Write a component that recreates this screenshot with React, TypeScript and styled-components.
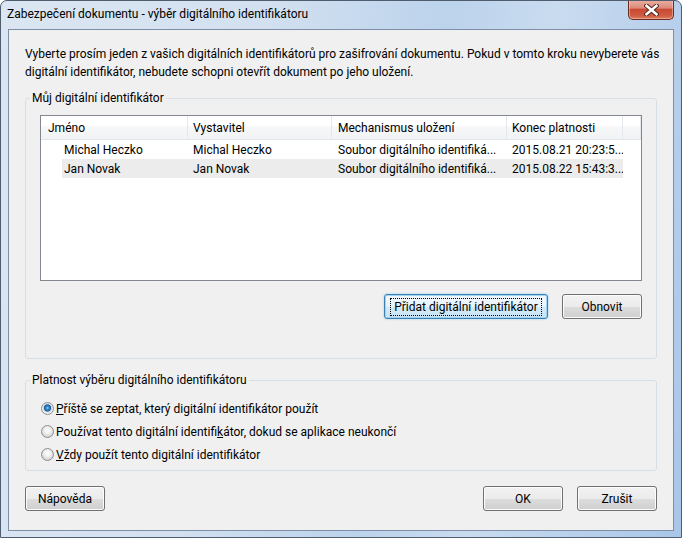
import { createGlobalStyle, styled } from "styled-components";

const GlobalStyle = createGlobalStyle`
  html, body {
    margin: 0;
    padding: 0;
  }
  body {
    width: 682px;
    height: 538px;
    overflow: hidden;
    font-family: Roboto, "Liberation Sans", sans-serif;
    font-size: 12px;
    color: #000;
  }
`;

const Window = styled.div`
  width: 682px;
  height: 538px;
  box-sizing: border-box;
  border: 1px solid #4f5d6e;
  border-radius: 7px 7px 0 0;
  background: linear-gradient(
    100deg,
    #dbe6f2 0%,
    #d2e0f0 35%,
    #bcd3ec 58%,
    #c9dbef 72%,
    #a9c6e8 100%
  );
  display: flex;
  flex-direction: column;
  overflow: hidden;
`;

const TitleBar = styled.div`
  height: 28px;
  display: flex;
  align-items: flex-start;
  flex-shrink: 0;
`;

const Title = styled.div`
  padding-left: 6px;
  line-height: 27px;
  white-space: nowrap;
`;

const CloseButton = styled.div`
  margin: -1px 7px 0 auto;
  width: 46px;
  height: 20px;
  box-sizing: border-box;
  border: 1px solid #6b2b20;
  border-top: none;
  border-radius: 0 0 5px 5px;
  background: linear-gradient(
    #eab1a4 0%,
    #dd8a78 42%,
    #c84a33 50%,
    #cf5a3f 80%,
    #dc7a5c 100%
  );
  box-shadow: inset 0 0 0 1px rgba(255, 220, 210, 0.45);
  display: flex;
  align-items: center;
  justify-content: center;
`;

const Client = styled.div`
  flex: 1;
  margin: 0 7px 6px 7px;
  border: 1px solid #7d8fa4;
  background: #f0f0f0;
  padding: 15px 16px 0 16px;
  display: flex;
  flex-direction: column;
`;

const Intro = styled.div`
  line-height: 18px;
  white-space: nowrap;
  margin-bottom: 8px;
`;

const GroupBox = styled.fieldset<{ $gap?: number }>`
  margin: ${(p) => p.$gap ?? 0}px 0 0 0;
  padding: 0;
  border: 1px solid #d5dfe5;
  border-radius: 3px;
  min-width: 0;
`;

const Legend = styled.legend`
  margin-left: 4px;
  padding: 0 2px;
  line-height: 18px;
`;

const Table = styled.div`
  width: 602px;
  height: 166px;
  box-sizing: border-box;
  margin: 8px 0 0 14px;
  border: 1px solid #828790;
  background: #fff;
`;

const HeaderRow = styled.div`
  display: grid;
  grid-template-columns: 147px 144px 175px 116px 1fr;
  height: 24px;
  box-sizing: border-box;
  border-bottom: 1px solid #e2e5ea;
  background: linear-gradient(#ffffff 0%, #ffffff 45%, #f6f7f8 46%, #f2f3f5 100%);
`;

const HeaderCell = styled.div<{ $pad: number }>`
  border-right: 1px solid #e3e8ee;
  padding-left: ${(p) => p.$pad}px;
  padding-top: 1px;
  line-height: 22px;
  white-space: nowrap;
  overflow: hidden;
`;

const DataRow = styled.div<{ $selected?: boolean }>`
  margin-left: 21px;
  width: 561px;
  height: 19px;
  display: grid;
  grid-template-columns: 126px 144px 175px 116px;
  line-height: 21px;
  background: ${(p) => (p.$selected ? "#ececec" : "transparent")};
`;

const Cell = styled.div<{ $pad: number }>`
  padding-left: ${(p) => p.$pad}px;
  white-space: nowrap;
  overflow: hidden;
`;

const ButtonRow = styled.div`
  width: 602px;
  margin: 13px 0 39px 14px;
  display: flex;
  justify-content: flex-end;
  gap: 14px;
`;

const Button = styled.button<{ $w: number; $focused?: boolean }>`
  width: ${(p) => p.$w}px;
  height: 25px;
  box-sizing: border-box;
  padding: 0;
  font: inherit;
  color: #000;
  border-radius: 3px;
  border: 1px solid ${(p) => (p.$focused ? "#3c7fb1" : "#707070")};
  background: ${(p) =>
    p.$focused
      ? "linear-gradient(#f2f8fd 0%, #e7f3fb 50%, #d4ebf8 51%, #c6e3f5 100%)"
      : "linear-gradient(#f2f2f2 0%, #ebebeb 50%, #dddddd 51%, #cfcfcf 100%)"};
  box-shadow: ${(p) =>
    p.$focused
      ? "inset 0 0 0 1px #9fd5f3, 0 0 2px #7fc4ef"
      : "inset 0 0 0 1px #fcfcfc"};
  display: flex;
  align-items: center;
  justify-content: center;
`;

const FocusLabel = styled.span`
  outline: 1px dotted #000;
  outline-offset: 0;
  padding: 0 3px;
  line-height: 16px;
`;

const RadioList = styled.div`
  margin: 8px 0 4px 15px;
`;

const RadioRow = styled.label`
  height: 23px;
  display: flex;
  align-items: center;
  gap: 2px;
  white-space: nowrap;
`;

const RadioDot = styled.span<{ $checked?: boolean }>`
  width: 13px;
  height: 13px;
  box-sizing: border-box;
  border-radius: 50%;
  border: 1px solid #8e8f8f;
  flex-shrink: 0;
  background: ${(p) =>
    p.$checked
      ? "radial-gradient(circle at 50% 45%, #a5d3f5 0, #3a86cc 1.5px, #1d5a9c 3.2px, #c9d9e8 4px, #f2f2f2 5.5px)"
      : "radial-gradient(circle at 50% 40%, #ffffff 0, #f1f1f1 3px, #d6d6d6 6px)"};
`;

const Footer = styled.div`
  margin-top: 15px;
  display: flex;
  gap: 14px;
  & > :first-child {
    margin-right: auto;
  }
`;

export default function App() {
  return (
    <>
      <GlobalStyle />
      <Window>
        <TitleBar>
          <Title>Zabezpečení dokumentu - výběr digitálního identifikátoru</Title>
          <CloseButton>
            <svg width="15" height="12" viewBox="0 0 15 12">
              <path
                d="M2.5 1.8 L12.5 10.2 M12.5 1.8 L2.5 10.2"
                stroke="#4a1e16"
                strokeWidth="4.4"
                strokeLinecap="square"
                fill="none"
              />
              <path
                d="M2.5 1.8 L12.5 10.2 M12.5 1.8 L2.5 10.2"
                stroke="#ffffff"
                strokeWidth="2.6"
                strokeLinecap="square"
                fill="none"
              />
            </svg>
          </CloseButton>
        </TitleBar>
        <Client>
          <Intro>
            Vyberte prosím jeden z vašich digitálních identifikátorů pro zašifrování dokumentu. Pokud v tomto kroku nevyberete vás
            <br />
            digitální identifikátor, nebudete schopni otevřít dokument po jeho uložení.
          </Intro>

          <GroupBox>
            <Legend>Můj digitální identifikátor</Legend>
            <Table>
              <HeaderRow>
                <HeaderCell $pad={7}>Jméno</HeaderCell>
                <HeaderCell $pad={5}>Vystavitel</HeaderCell>
                <HeaderCell $pad={6}>Mechanismus uložení</HeaderCell>
                <HeaderCell $pad={5}>Konec platnosti</HeaderCell>
                <HeaderCell $pad={0} />
              </HeaderRow>
              <DataRow>
                <Cell $pad={2}>Michal Heczko</Cell>
                <Cell $pad={5}>Michal Heczko</Cell>
                <Cell $pad={6}>Soubor digitálního identifiká...</Cell>
                <Cell $pad={5}>2015.08.21 20:23:5...</Cell>
              </DataRow>
              <DataRow $selected>
                <Cell $pad={2}>Jan Novak</Cell>
                <Cell $pad={5}>Jan Novak</Cell>
                <Cell $pad={6}>Soubor digitálního identifiká...</Cell>
                <Cell $pad={5}>2015.08.22 15:43:3...</Cell>
              </DataRow>
            </Table>
            <ButtonRow>
              <Button $w={164} $focused>
                <FocusLabel>Přidat digitální identifikátor</FocusLabel>
              </Button>
              <Button $w={80}>Obnovit</Button>
            </ButtonRow>
          </GroupBox>

          <GroupBox $gap={12}>
            <Legend>Platnost výběru digitálního identifikátoru</Legend>
            <RadioList>
              <RadioRow>
                <RadioDot $checked />
                <span>
                  <u>P</u>říště se zeptat, který digitální identifikátor použít
                </span>
              </RadioRow>
              <RadioRow>
                <RadioDot />
                <span>
                  Používat tento digitální identifi<u>k</u>átor, dokud se aplikace neukončí
                </span>
              </RadioRow>
              <RadioRow>
                <RadioDot />
                <span>
                  <u>V</u>ždy použít tento digitální identifikátor
                </span>
              </RadioRow>
            </RadioList>
          </GroupBox>

          <Footer>
            <Button $w={80}>Nápověda</Button>
            <Button $w={80}>OK</Button>
            <Button $w={80}>Zrušit</Button>
          </Footer>
        </Client>
      </Window>
    </>
  );
}
